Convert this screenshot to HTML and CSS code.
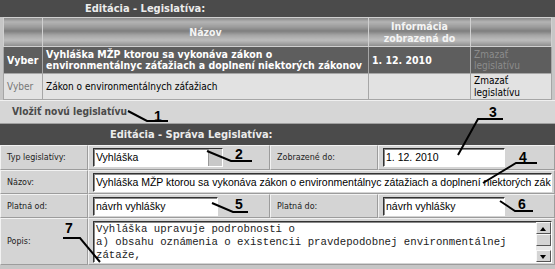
FILE: index.html
```html
<!DOCTYPE html>
<html>
	<head>
		<meta charset="UTF-8">
		<title>Editácia - Legislatíva</title>
		<link rel="stylesheet" href="styles.css">
	</head>
	<body>
		<div class="page">
			<div class="bar">Editácia - Legislatíva:</div>
			<div class="list_box">
				<table class="list">
					<tr class="head">
						<th class="c1"></th>
						<th class="c2">Názov</th>
						<th class="c3">Informácia<br>zobrazená do</th>
						<th class="c4"></th>
					</tr>
					<tr class="sel">
						<td>Vyber</td>
						<td>Vyhláška MŽP ktorou sa vykonáva zákon o environmentálnyc záťažiach a doplnení niektorých zákonov</td>
						<td>1. 12. 2010</td>
						<td class="del">Zmazať legislatívu</td>
					</tr>
					<tr class="row">
						<td class="pick">Vyber</td>
						<td>Zákon o environmentálnych záťažiach</td>
						<td></td>
						<td class="del">Zmazať legislatívu</td>
					</tr>
				</table>
			</div>
			<div class="add"><a href="javascript:;">Vložiť novú legislatívu</a></div>
			<div class="bar bar_sub">Editácia - Správa Legislatíva:</div>
			<div class="form">
				<div class="lab">Typ legislatívy:</div>
				<div class="val"><div class="field select w130"><span>Vyhláška</span><i></i></div></div>
				<div class="lab">Zobrazené do:</div>
				<div class="val"><div class="field w122">1. 12. 2010</div></div>

				<div class="lab">Názov:</div>
				<div class="val wide"><div class="field full">Vyhláška MŽP ktorou sa vykonáva zákon o environmentálnyc zátažiach a doplnení niektorých zákonov</div></div>

				<div class="lab">Platná od:</div>
				<div class="val"><div class="field w125">návrh vyhlášky</div></div>
				<div class="lab">Platná do:</div>
				<div class="val"><div class="field w122">návrh vyhlášky</div></div>

				<div class="lab">Popis:</div>
				<div class="val wide">
					<div class="area">
						<div class="area_text">Vyhláška upravuje podrobnosti o
a) obsahu oznámenia o existencii pravdepodobnej environmentálnej
zátaže,</div>
						<div class="scroll">
							<span class="btn up"></span>
							<span class="thumb"></span>
							<span class="track"></span>
							<span class="btn down"></span>
						</div>
					</div>
				</div>
			</div>

			<!-- popisky 1-7 -->
			<svg class="notes" width="555" height="269" viewBox="0 0 555 269">
				<g fill="none" stroke="#000" stroke-width="2">
					<polyline points="128,111 147,121 168,121"/>
					<polyline points="207,151 231,161 252,161"/>
					<polyline points="503,119 478,119 458,155"/>
					<polyline points="537,163 516,163 483,183"/>
					<polyline points="212,203 233,212 248,212"/>
					<polyline points="500,201 515,211 533,211"/>
					<polyline points="63,238 80,238 100,262"/>
				</g>
				<g class="num">
					<text x="158" y="121">1</text>
					<text x="239" y="159">2</text>
					<text x="493" y="117">3</text>
					<text x="523" y="162">4</text>
					<text x="239" y="209">5</text>
					<text x="522" y="209">6</text>
					<text x="69" y="233">7</text>
				</g>
			</svg>
		</div>
	</body>
</html>
```

FILE: styles.css
```css
body {
    margin: 0;
    padding: 0;
    background: #c6c6c6;
    font-family: "DejaVu Sans Condensed", "DejaVu Sans", sans-serif;
    font-stretch: semi-condensed;
}

a {
    text-decoration: none;
}

.page {
    position: relative;
    width: 555px;
    height: 269px;
    overflow: hidden;
    background: #c6c6c6;
}

.bar {
    height: 17px;
    background: #4b4b4b;
    color: #ececec;
    font-size: 11px;
    font-weight: bold;
    line-height: 17px;
    padding-left: 85px;
}

.bar_sub {
    height: 21px;
    line-height: 21px;
    padding-left: 110px;
}

.list_box {
    padding: 0 3px;
}

.list {
    width: 549px;
    border-collapse: collapse;
    border: 1px solid #f0f0f0;
    font-size: 10px;
}

.list th,
.list td {
    border: 1px solid #a6a6a6;
    padding: 0 3px;
    text-align: left;
    vertical-align: middle;
}

.list .head th {
    height: 28px;
    background: linear-gradient(#8e8e8e 0, #b4b4b4 12%, #9c9c9c 30%, #7e7e7e 45%, #a6a6a6 60%, #bdbdbd 78%, #8a8a8a 100%);
    color: #f4f4f4;
    font-size: 10.5px;
    font-weight: bold;
    text-align: center;
    line-height: 12px;
    border-color: #d0d0d0;
}

.list .c1 {
    width: 32px;
}

.list .c3 {
    width: 95px;
}

.list .c4 {
    width: 74px;
}

.list .sel td {
    height: 26px;
    background: #5e5e5e;
    color: #fff;
    font-size: 10.5px;
    font-weight: bold;
    line-height: 11px;
}

.list .sel td.del {
    color: #8c8c8c;
    font-size: 10px;
    font-weight: normal;
}

.list .row td {
    height: 25px;
    background: #e2e2e2;
    color: #000;
    line-height: 12px;
}

.list .row td.pick {
    color: #777;
}

.add {
    height: 22px;
    line-height: 22px;
    padding-left: 12px;
    background: #d6d6d6;
    border-top: 1px solid #f0f0f0;
    border-bottom: 1px solid #a0a0a0;
    font-size: 10.2px;
    font-weight: bold;
}

.add a {
    color: #4a4a4a;
}

.form {
    display: grid;
    grid-template-columns: 88px 182px 108px 177px;
    grid-template-rows: 25px 24px 24px 47px;
    background: #d4d4d4;
}

.lab,
.val {
    display: flex;
    align-items: center;
    box-sizing: border-box;
    border-top: 1px solid #f2f2f2;
    border-left: 1px solid #f2f2f2;
    border-right: 1px solid #9c9c9c;
    border-bottom: 1px solid #9c9c9c;
}

.lab {
    padding-left: 6px;
    font-family: "DejaVu Sans", sans-serif;
    font-stretch: normal;
    font-size: 8px;
    color: #222;
}

.val {
    padding-left: 4px;
}

.val.wide {
    grid-column: span 3;
    padding-right: 2px;
}

.field {
    height: 19px;
    box-sizing: border-box;
    background: #fff;
    border: 1px solid #fff;
    border-top-color: #333;
    border-left-color: #333;
    box-shadow: inset 1px 1px 0 #888;
    font: 10.5px/17px "Liberation Sans", Arial, sans-serif;
    color: #000;
    padding-left: 2px;
    white-space: nowrap;
    overflow: hidden;
}

.w130 {
    width: 130px;
}

.w122 {
    width: 122px;
}

.w125 {
    width: 125px;
}

.full {
    width: 100%;
}

.select {
    display: flex;
    padding-right: 0;
}

.select span {
    flex: 1;
}

.select i {
    width: 13px;
    background: #c8c8c8;
    border-left: 1px solid #999;
}

.area {
    display: flex;
    width: 100%;
    height: 42px;
    box-sizing: border-box;
    background: #fff;
    border: 1px solid #fff;
    border-top-color: #333;
    border-left-color: #333;
    box-shadow: inset 1px 1px 0 #888;
}

.area_text {
    flex: 1;
    padding: 1px 2px;
    font: 10.7px/13px "Liberation Mono", "Courier New", monospace;
    color: #222;
    white-space: pre;
    overflow: hidden;
}

.scroll {
    width: 15px;
    display: flex;
    flex-direction: column;
    background: #e8e8e8;
}

.scroll .btn,
.scroll .thumb {
    display: block;
    height: 12px;
    background: #d4d4d4;
    border: 1px solid #f8f8f8;
    border-right-color: #555;
    border-bottom-color: #555;
    box-sizing: border-box;
    position: relative;
}

.scroll .track {
    flex: 1;
}

.scroll .btn::after {
    content: "";
    position: absolute;
    left: 3px;
    top: 3px;
    border: 3px solid transparent;
}

.scroll .up::after {
    top: 1px;
    border-bottom: 4px solid #000;
}

.scroll .down::after {
    top: 4px;
    border-top: 4px solid #000;
}

.notes {
    position: absolute;
    left: 0;
    top: 0;
}

.notes .num text {
    font: bold 14px "Liberation Sans", Arial, sans-serif;
    fill: #000;
    text-anchor: middle;
}
```
